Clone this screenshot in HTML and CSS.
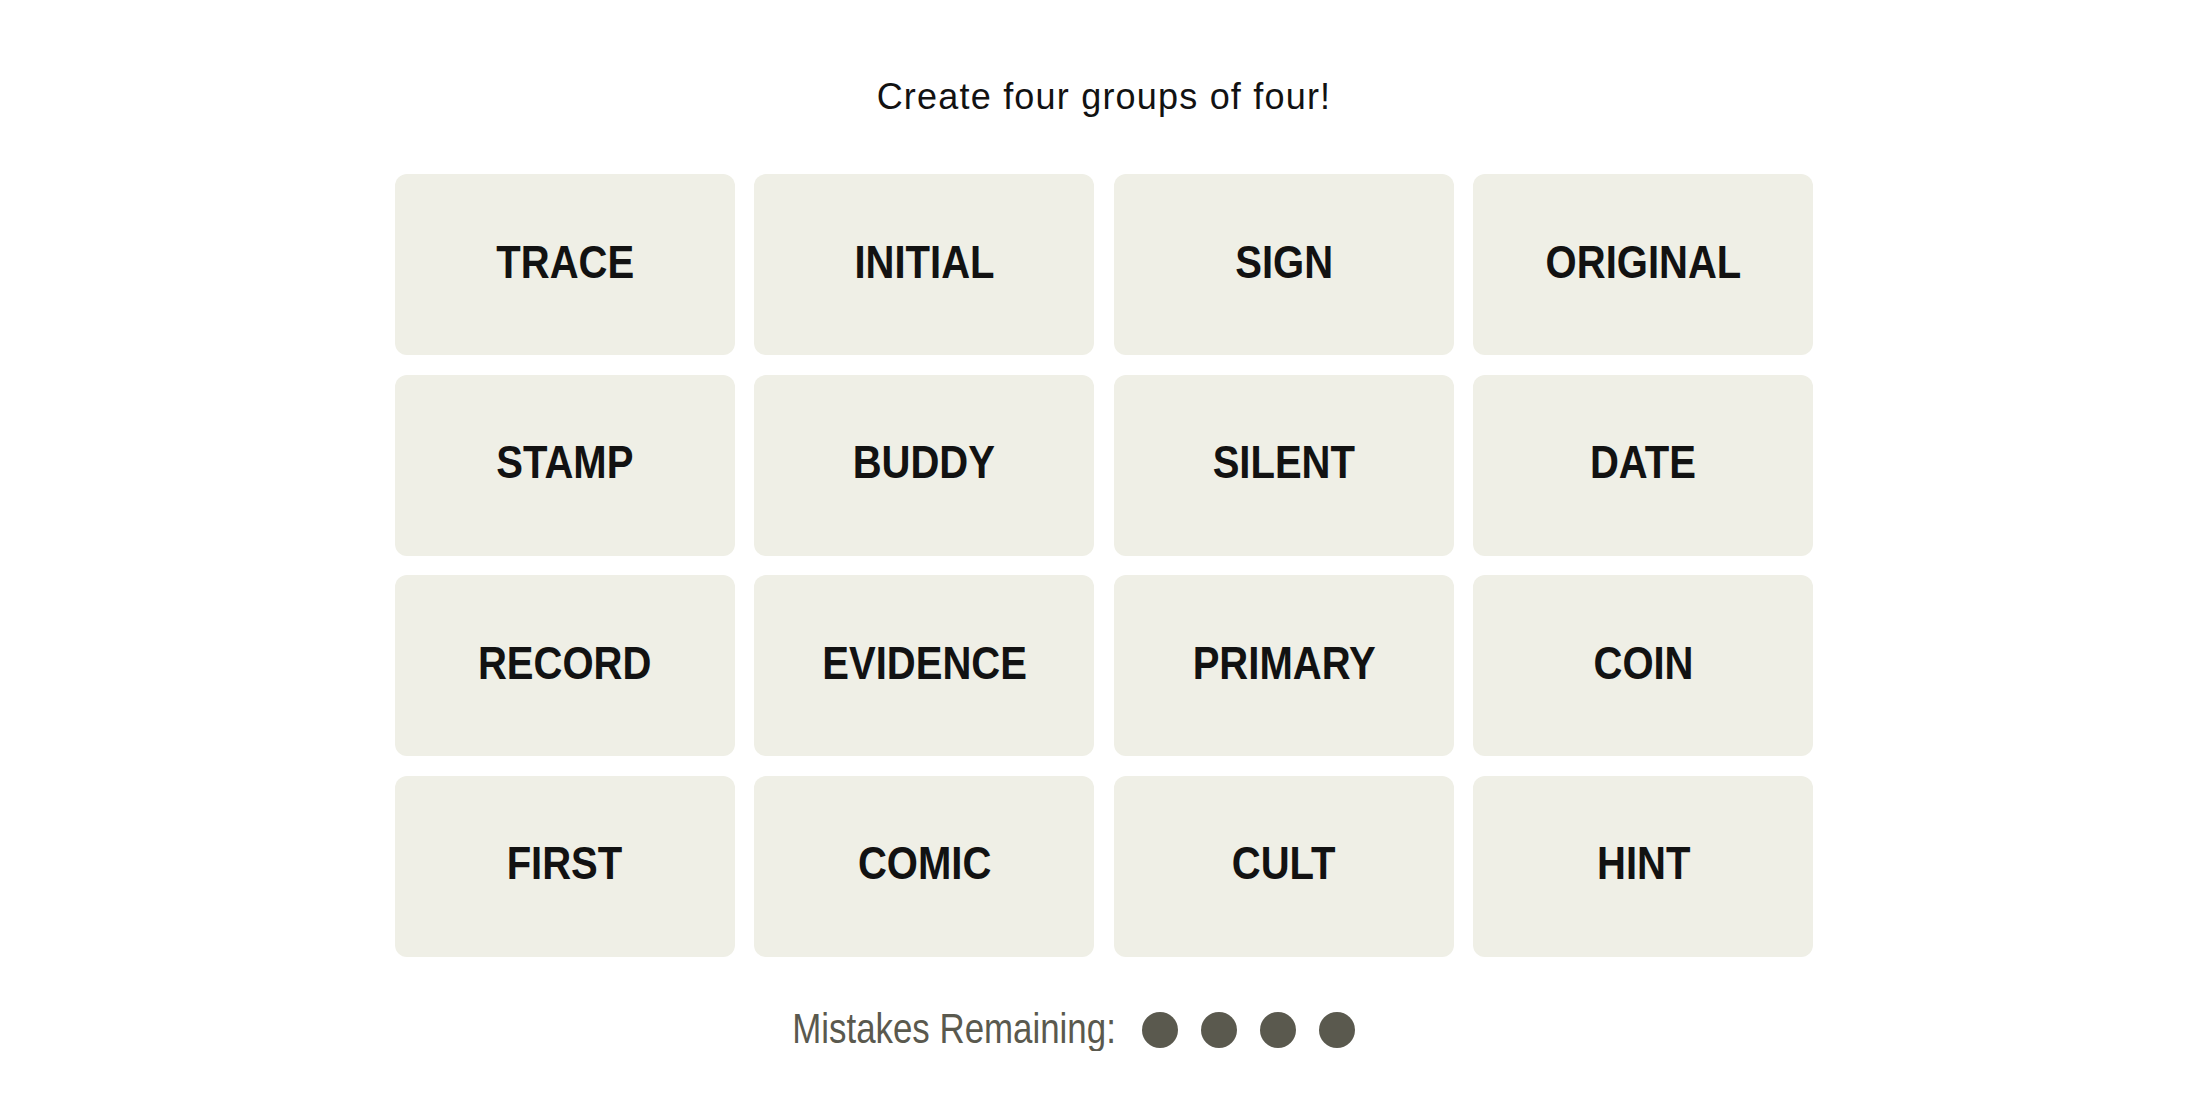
FILE: index.html
```html
<!DOCTYPE html>
<html>
<head>
<meta charset="utf-8">
<link rel="stylesheet" href="styles.css">
</head>
<body>
<main class="game">
  <p class="intro">Create four groups of four!</p>
  <div class="board">
    <div class="tile"><span class="word">TRACE</span></div>
    <div class="tile"><span class="word">INITIAL</span></div>
    <div class="tile"><span class="word">SIGN</span></div>
    <div class="tile"><span class="word">ORIGINAL</span></div>
    <div class="tile"><span class="word">STAMP</span></div>
    <div class="tile"><span class="word">BUDDY</span></div>
    <div class="tile"><span class="word">SILENT</span></div>
    <div class="tile"><span class="word">DATE</span></div>
    <div class="tile"><span class="word">RECORD</span></div>
    <div class="tile"><span class="word">EVIDENCE</span></div>
    <div class="tile"><span class="word">PRIMARY</span></div>
    <div class="tile"><span class="word">COIN</span></div>
    <div class="tile"><span class="word">FIRST</span></div>
    <div class="tile"><span class="word">COMIC</span></div>
    <div class="tile"><span class="word">CULT</span></div>
    <div class="tile"><span class="word">HINT</span></div>
  </div>
  <div class="mistakes">
    <span class="mistakes-label">Mistakes Remaining:</span>
    <span class="dots">
      <span class="dot"></span>
      <span class="dot"></span>
      <span class="dot"></span>
      <span class="dot"></span>
    </span>
  </div>
</main>
</body>
</html>
```
FILE: styles.css
```css
html, body {
  margin: 0;
  padding: 0;
  background: #ffffff;
}
.game {
  display: flex;
  flex-direction: column;
  align-items: center;
  padding-left: 8px;
  font-family: "Liberation Sans Narrow", "Liberation Sans", Arial, sans-serif;
  color: #121212;
}
.intro {
  margin: 74px 0 0;
  font-size: 36px;
  line-height: 46px;
  letter-spacing: 1.2px;
  font-weight: 400;
  color: #121212;
}
.board {
  margin-top: 54px;
  display: grid;
  grid-template-columns: repeat(4, 340px);
  grid-auto-rows: 181px;
  column-gap: 19.5px;
  row-gap: 19.5px;
}
.tile {
  background: #efefe6;
  border-radius: 12px;
  display: flex;
  align-items: center;
  justify-content: center;
  padding-bottom: 6px;
  box-sizing: border-box;
}
.word {
  display: inline-block;
  font-weight: 700;
  font-size: 46px;
  color: #121212;
  transform: scaleX(0.87);
  white-space: nowrap;
}
.mistakes {
  margin-top: 50px;
  margin-right: 60px;
  display: flex;
  align-items: center;
  gap: 26px;
  color: #5a594e;
}
.mistakes-label {
  display: inline-block;
  font-size: 42px;
  line-height: 44px;
  white-space: nowrap;
  transform: scaleX(0.83);
  transform-origin: right center;
  margin-left: -67px;
}
.dots {
  display: flex;
  gap: 23px;
  margin-top: 2px;
}
.dot {
  width: 36px;
  height: 36px;
  border-radius: 50%;
  background: #5a594e;
}
```
